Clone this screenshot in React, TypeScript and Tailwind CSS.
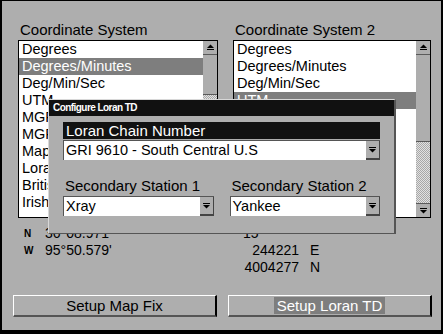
import React from 'react'

const items = [
  'Degrees',
  'Degrees/Minutes',
  'Deg/Min/Sec',
  'UTM',
  'MGRS',
  'MGRS Standard',
  'Map Grid',
  'Loran TD',
  'British Grid',
  'Irish Grid',
]

// small condensed bold face used by the title bar and the N / W markers
const narrow = 'font-bold tracking-[-0.55px]'

function UpArrow() {
  return (
    <svg width="9" height="7" viewBox="0 0 9 7">
      <polygon points="4.5,0.5 8,4 1,4" fill="#000" />
      <rect x="1" y="5" width="7" height="1" fill="#000" />
    </svg>
  )
}

function DownArrow() {
  return (
    <svg width="9" height="7" viewBox="0 0 9 7">
      <rect x="1" y="1" width="7" height="1" fill="#000" />
      <polygon points="1,3 8,3 4.5,6.5" fill="#000" />
    </svg>
  )
}

function ListBox({
  label,
  selected,
  width,
  thumbEnd,
}: {
  label: string
  selected: number
  width: string
  thumbEnd: string
}) {
  return (
    <div className={`flex flex-col ${width}`}>
      <div className="h-[20px] pl-[2px] text-[15px] leading-[20px] text-black">{label}</div>
      <div className="flex h-[178px] border border-black bg-white">
        <div className="flex-1 overflow-hidden">
          {items.map((item, i) => (
            <div
              key={item}
              className={`h-[17px] pl-[3px] text-[14.5px] leading-[17px] whitespace-nowrap ${
                i === selected ? 'bg-[#7e7e7e] text-white' : 'text-black'
              }`}
            >
              {item}
            </div>
          ))}
        </div>
        <div className="flex w-[14px] flex-col bg-[#aeaeae]">
          <div className="flex h-[14px] items-center justify-center border-b border-[#5a5a5a]">
            <UpArrow />
          </div>
          <div className={`${thumbEnd} border-b border-[#5a5a5a]`} />
          <div className="flex-1 bg-[repeating-conic-gradient(#e2e2e2_0%_25%,#a8a8a8_0%_50%)] bg-[length:2px_2px]" />
          <div className="flex h-[14px] items-center justify-center border-t border-[#5a5a5a]">
            <DownArrow />
          </div>
        </div>
      </div>
    </div>
  )
}

function Select({ value }: { value: string }) {
  return (
    <div className="flex h-[20px] border-l border-t border-[#555] bg-white">
      <div className="flex-1 pl-[2px] text-[14.5px] leading-[19px] text-black whitespace-nowrap">{value}</div>
      <div className="flex w-[14px] items-center justify-center border-b-2 border-r border-[#444] bg-[#aeaeae]">
        <DownArrow />
      </div>
    </div>
  )
}

function Button({ label, focused }: { label: string; focused?: boolean }) {
  return (
    <div className="flex h-[22px] w-[204px] items-center justify-center border-l border-t border-white border-r-2 border-r-black border-b-2 border-b-[#555]">
      <span
        className={`px-[3px] text-[15px] leading-[17px] ${focused ? 'bg-[#7e7e7e] text-white' : 'text-black'}`}
      >
        {label}
      </span>
    </div>
  )
}

export default function App() {
  return (
    <div className="relative box-border h-[334px] w-[443px] overflow-hidden border-b-4 border-l-2 border-r-2 border-t border-black bg-[#aeaeae] font-[family-name:Liberation_Sans,Arial,sans-serif]">
      {/* Coordinate lists */}
      <div className="flex gap-[15px] pl-[16px] pt-[19px]">
        <ListBox label="Coordinate System" selected={1} width="w-[200px]" thumbEnd="h-[40px]" />
        <ListBox label="Coordinate System 2" selected={3} width="w-[198px]" thumbEnd="h-[87px]" />
      </div>

      {/* Position readouts */}
      <div className="mt-[7px] flex text-[14px] leading-[17px] text-black">
        <div className="ml-[22px] w-[215px]">
          <div className="flex">
            <span className={`w-[21px] text-[10px] ${narrow}`}>N</span>
            <span>36°08.971'</span>
          </div>
          <div className="flex">
            <span className={`w-[21px] text-[10px] ${narrow}`}>W</span>
            <span>95°50.579'</span>
          </div>
        </div>
        <div className="pl-[2px]">
          <div className="pl-[2px]">15</div>
          <div className="flex">
            <span className="w-[58px] text-right">244221</span>
            <span className="pl-[11px]">E</span>
          </div>
          <div className="flex">
            <span className="w-[58px] text-right">4004277</span>
            <span className="pl-[11px]">N</span>
          </div>
        </div>
      </div>

      {/* Buttons */}
      <div className="mt-[19px] flex gap-[11px] pl-[11px]">
        <Button label="Setup Map Fix" />
        <Button label="Setup Loran TD" focused />
      </div>

      {/* Configure Loran TD dialog */}
      <div className="absolute left-[46px] top-[98px] w-[348px] border-b border-l border-r-2 border-t border-b-[#555] border-l-[#d8d8d8] border-r-[#555] border-t-[#d8d8d8] bg-[#aeaeae]">
        <div className={`h-[16px] bg-[#111] pl-[4px] text-[10px] leading-[16px] text-white ${narrow}`}>
          Configure Loran TD
        </div>
        <div className="px-[14px] pb-[17px] pt-[6px]">
          <div className="h-[17px] bg-[#111] pl-[3px] text-[15px] leading-[17px] text-white">Loran Chain Number</div>
          <div className="mt-[1px]">
            <Select value="GRI 9610 - South Central U.S" />
          </div>
          <div className="mt-[17px] grid grid-cols-2 gap-x-[16px]">
            <div className="pl-[2px] text-[15px] leading-[17px] text-black">Secondary Station 1</div>
            <div className="pl-[2px] text-[15px] leading-[17px] text-black">Secondary Station 2</div>
            <div className="mt-[2px]">
              <Select value="Xray" />
            </div>
            <div className="mt-[2px]">
              <Select value="Yankee" />
            </div>
          </div>
        </div>
      </div>
    </div>
  )
}
